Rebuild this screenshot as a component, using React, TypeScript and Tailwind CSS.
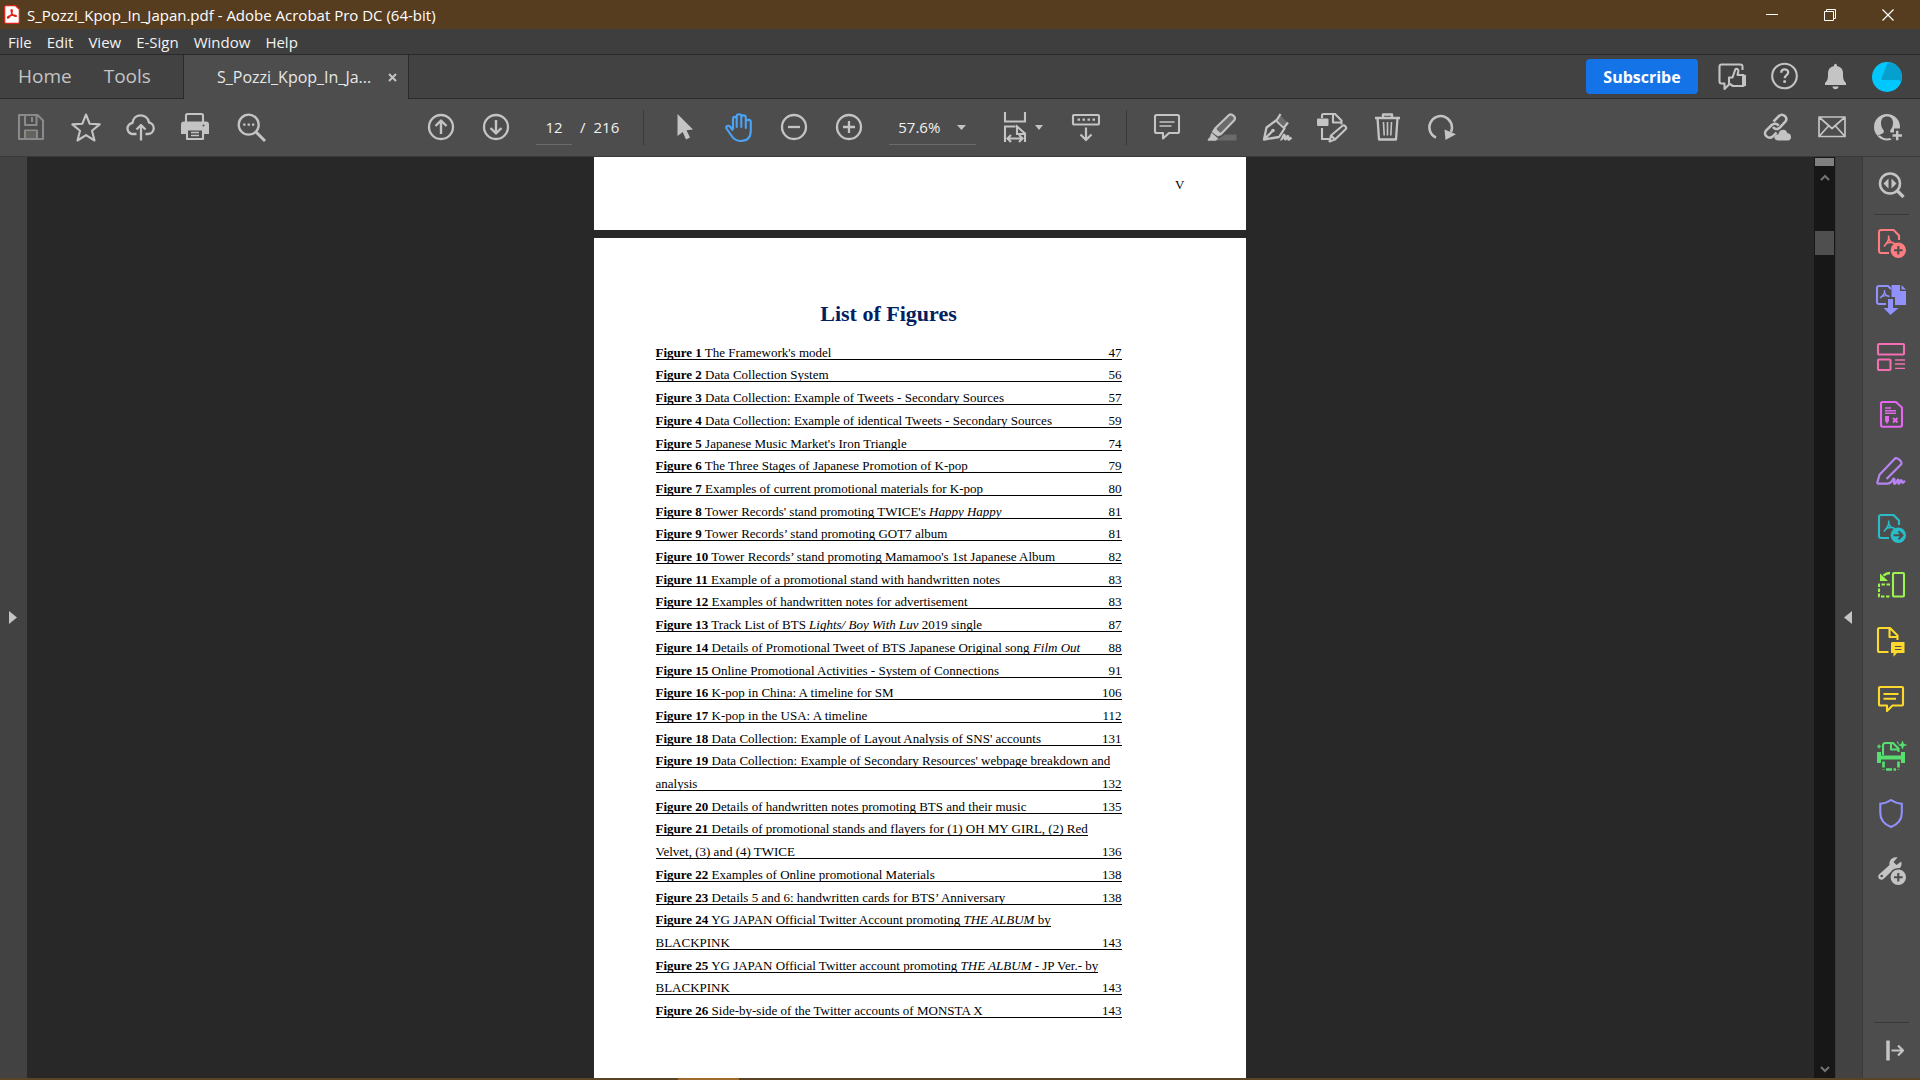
import React from "react";

type IconProps = { children: React.ReactNode };

function Icon({ children }: IconProps) {
  return (
    <svg
      viewBox="0 0 33 33"
      width="33"
      height="33"
      fill="none"
      stroke="currentColor"
      strokeWidth="2.1"
      strokeLinejoin="round"
      aria-hidden="true"
      className="shrink-0"
    >
      {children}
    </svg>
  );
}

function ToolButton({ label, children, className = "" }: { label: string; children: React.ReactNode; className?: string }) {
  return (
    <button type="button" aria-label={label} className={"flex h-full w-[55px] shrink-0 items-center justify-center " + className}>
      <Icon>{children}</Icon>
    </button>
  );
}

function SideButton({ label, color, height = "h-[57px]", children }: { label: string; color: string; height?: string; children: React.ReactNode }) {
  return (
    <button type="button" aria-label={label} className={"flex w-full shrink-0 items-center justify-center " + height + " " + color}>
      <Icon>{children}</Icon>
    </button>
  );
}

function AcrobatMark() {
  return (
    <svg viewBox="0 0 16 19" width="16" height="19" aria-hidden="true">
      <path d="M2 .7h9.5l3.8 3.6V17a1.3 1.3 0 0 1-1.3 1.3H2A1.3 1.3 0 0 1 .7 17V2A1.3 1.3 0 0 1 2 .7z" fill="#fff" stroke="#e2231a" strokeWidth="1.2" />
      <path d="M7.5 4.6c1.4 0 .8 3-.4 5.2-1 1.9-2.700 3.500-3.500 3.100-.9-.6 1.200-2 3.600-2.500 2.500-.5 5.200-.3 5.200.6 0 1-2.300.300-3.700-1.300C7.300 8.200 6.500 4.600 7.500 4.600z" fill="none" stroke="#e2231a" strokeWidth="1.3" />
    </svg>
  );
}

function PdfGlyph() {
  return (
    <path d="M13.5 8.5c1 3-.6 7-4.6 11M13.5 10c.6 4 3 6.300 6.500 6.500M10.500 16.800c2.500-1.300 5-1.700 8-1.300" strokeWidth="1.6" />
  );
}

function TitleBar() {
  return (
    <header className="flex h-[29px] shrink-0 items-center bg-[#573d20] text-white">
      <div className="flex items-center gap-[7px] pl-1">
        <AcrobatMark />
        <h1 className="text-[15px] leading-5">S_Pozzi_Kpop_In_Japan.pdf - Adobe Acrobat Pro DC (64-bit)</h1>
      </div>
      <div className="ml-auto flex pr-[3px]">
        <button type="button" aria-label="Minimize" className="flex h-[29px] w-[58px] items-center justify-center">
          <svg width="12" height="12" stroke="currentColor"><path d="M0 5.500h12" /></svg>
        </button>
        <button type="button" aria-label="Restore" className="flex h-[29px] w-[58px] items-center justify-center">
          <svg width="12" height="12" stroke="currentColor" fill="none"><path d="M.5 2.500h9v9h-9zM2.500 2.500v-2h9v9h-2" /></svg>
        </button>
        <button type="button" aria-label="Close" className="flex h-[29px] w-[58px] items-center justify-center">
          <svg width="12" height="12" stroke="currentColor" strokeWidth="1.2"><path d="M.5.5l11 11M11.500.5l-11 11" /></svg>
        </button>
      </div>
    </header>
  );
}

function MenuBar() {
  return (
    <nav aria-label="Menu" className="flex h-[26px] shrink-0 items-center gap-[15px] border-b border-[#2a2a2a] bg-[#3e3e3e] pl-2 text-[15px] leading-5 text-[#f2f2f2]">
      {["File", "Edit", "View", "E-Sign", "Window", "Help"].map((item) => (
        <button key={item} type="button">{item}</button>
      ))}
    </nav>
  );
}

function TabBar() {
  return (
    <div className="flex h-11 shrink-0 bg-[#424242] text-[#c4c4c4]">
      <div className="flex w-[184px] shrink-0 gap-8 border-r border-b border-[#2a2a2a] pl-[18px] text-[19px]">
        <button type="button">Home</button>
        <button type="button">Tools</button>
      </div>
      <div className="flex w-[224px] shrink-0 items-center bg-[#4d4d4d] pl-[33px]">
        <span className="w-[159px] text-[16px] text-[#e6e6e6]">S_Pozzi_Kpop_In_Ja...</span>
        <button type="button" aria-label="Close tab" className="ml-3">
          <svg width="9" height="9" stroke="currentColor" strokeWidth="2"><path d="M1 1l7 7M8 1L1 8" /></svg>
        </button>
      </div>
      <div className="flex flex-1 items-center justify-end border-b border-l border-[#2a2a2a] pr-2">
        <button type="button" className="mr-[10px] h-[35px] w-28 rounded bg-[#1473e6] text-[16px] font-bold text-white">Subscribe</button>
        <button type="button" aria-label="Feedback" className="flex w-[51px] justify-center">
          <Icon>
            <path d="M25.500 10V6.500a2 2 0 0 0-2-2h-19a2 2 0 0 0-2 2v15a2 2 0 0 0 2 2h3V29l5-5" />
            <path d="M12 17.500h3.500l3-8.500c2.500-.5 3.300 1 2.700 3l-.7 3h6v11H16l-4-2.500z" />
            <path d="M25 15h4v11h-4z" fill="currentColor" stroke="none" />
          </Icon>
        </button>
        <button type="button" aria-label="Help" className="flex w-[51px] justify-center">
          <Icon>
            <circle cx="16.5" cy="16" r="12.3" />
            <path d="M13.200 12.700c0-4.500 7-4.300 7-.4 0 2.900-3.500 2.700-3.500 6" strokeWidth="2.3" />
            <circle cx="16.6" cy="21.5" r="1.5" fill="currentColor" stroke="none" />
          </Icon>
        </button>
        <button type="button" aria-label="Notifications" className="flex w-[51px] justify-center">
          <Icon>
            <path d="M15 6c0-3 3-3 3 0 4 .8 6 3.500 6 7.500 0 5.500.5 7 3 9.500v2H6v-2c2.500-2.500 3-4 3-9.500 0-4 2-6.700 6-7.500zM13.500 26.500h6c0 3.500-6 3.500-6 0z" fill="currentColor" stroke="none" />
          </Icon>
        </button>
        <button type="button" aria-label="Account" className="flex w-[51px] justify-center">
          <svg width="30" height="30" viewBox="0 0 30 30" aria-hidden="true">
            <circle cx="15" cy="15" r="15" fill="#00c8ff" />
            <path d="M15.500.500A14.800 14.800 0 0 1 29 20l-2-2H9z" fill="#06a0cf" />
          </svg>
        </button>
      </div>
    </div>
  );
}

function Toolbar() {
  return (
    <div role="toolbar" aria-label="Tools" className="flex h-[58px] shrink-0 items-center border-b border-[#3a3a3a] bg-[#4d4d4d] pr-[5px] pl-1 text-[#c4c4c4]">
      <ToolButton label="Save" className="text-[#8a8a8a]">
        <path d="M4 4h18.500l5.500 5.500V28H4zM10 4v10h11.500V4M10 28v-8.500h12V28" />
        <path d="M11 20.500h10V27H11z" fill="#66625e" stroke="none" />
        <path d="M17 6v5" />
      </ToolButton>
      <ToolButton label="Add to favorites">
        <path d="M16 3.500l3.700 9.300 10 .6-7.700 6.400 2.500 9.700L16 24.100l-8.500 5.400L10 19.800l-7.700-6.400 10-.6z" />
      </ToolButton>
      <ToolButton label="Upload to cloud">
        <path d="M11.500 23H8.500a5.500 5.500 0 0 1-1-11C8 6.500 12 4.300 15.500 4.300s7.500 2.200 8.500 7.200a5.800 5.800 0 0 1-1 11.500h-2.500M16 29.500V14M11.500 18.500L16 14l4.500 4.500" strokeWidth="2.3" />
      </ToolButton>
      <ToolButton label="Print">
        <path d="M6 11V4.500c0-1 .5-1.500 1.500-1.500h14c1 0 1.500.5 1.500 1.500V11" />
        <path d="M1 13.500c0-2 1-3 3-3h22c2 0 3 1 3 3V23h-5v-3.500H6V23H1z" fill="currentColor" stroke="none" />
        <path d="M7 19v9h16v-9" />
        <path d="M11 21.500h8M11 24.500h8" strokeWidth="1.3" />
        <circle cx="23.5" cy="14.5" r="1" fill="#4d4d4d" stroke="none" />
      </ToolButton>
      <ToolButton label="Find">
        <circle cx="13.7" cy="13.7" r="10" strokeWidth="2.3" />
        <path d="M21 21l9 9" strokeWidth="3" />
        <path d="M8.200 13.700h2.300M12.600 13.700h2.300M17 13.700h2.300" strokeWidth="2.2" />
      </ToolButton>

      <ToolButton label="Previous page" className="ml-[135px]">
        <circle cx="16" cy="16" r="12" strokeWidth="2.3" />
        <path d="M16 23V10M10.500 15L16 9.500l5.500 5.500" strokeWidth="2.4" />
      </ToolButton>
      <ToolButton label="Next page">
        <circle cx="16" cy="16" r="12" strokeWidth="2.3" />
        <path d="M16 9v13M10.500 17l5.500 5.500 5.500-5.500" strokeWidth="2.4" />
      </ToolButton>
      <div className="ml-3 flex h-[35px] items-center text-[15px] text-[#f0f0f0]">
        <input aria-label="Page number" defaultValue="12" className="h-[35px] w-9 border-b border-[#6a6a6a] bg-transparent text-center outline-none" />
        <span className="ml-2">/</span>
        <span className="ml-2">216</span>
      </div>
      <div className="mr-[13px] ml-6 h-[35px] w-px bg-[#393939]" />
      <ToolButton label="Select">
        <path d="M9.500 3L25 18.500l-6.500.7 3.500 7.300-4 2-3.300-7.500-5.200 4z" fill="currentColor" stroke="none" />
      </ToolButton>
      <ToolButton label="Pan" className="text-[#4ba3f5]">
        <path d="M10 18V8c0-2.800 3.700-2.800 3.700 0v8V5.500c0-3 4.600-3 4.600 0V16 6.500c0-2.800 4.500-2.800 4.500 0V17v-6c0-2.800 5-2.800 5 0v8.500c0 7-4 10.500-10.300 10.500-5 0-7.500-2.500-9.500-6L3.500 17.500c-1-2.300 1.800-3.700 3.500-2L10 19.500" />
      </ToolButton>
      <ToolButton label="Zoom out">
        <circle cx="16" cy="16" r="12" strokeWidth="2.3" />
        <path d="M10 16h12" strokeWidth="2.3" />
      </ToolButton>
      <ToolButton label="Zoom in">
        <circle cx="16" cy="16" r="12" strokeWidth="2.3" />
        <path d="M10 16h12M16 10v12" strokeWidth="2.3" />
      </ToolButton>
      <div className="ml-3 grid w-[87px] shrink-0 items-center">
        <select aria-label="Zoom level" className="col-start-1 row-start-1 h-[35px] w-full appearance-none border-b border-[#6a6a6a] bg-transparent pl-[9px] text-[15px] text-[#f0f0f0]">
          <option>57.6%</option>
        </select>
        <svg width="9" height="5" className="pointer-events-none col-start-1 row-start-1 mr-[10px] justify-self-end" fill="currentColor"><path d="M0 0h9L4.500 5z" /></svg>
      </div>
      <button type="button" aria-label="Fit width" className="ml-[23px] flex shrink-0 items-center">
        <Icon>
          <path d="M6 1v9.500h20V1M16.500 15.500H6V31M26 31V22.500l-8-7v7.500h8M8.500 27.500h15M12 24l-3.500 3.500L12 31M20 24l3.500 3.500L20 31" strokeLinejoin="miter" />
        </Icon>
        <svg width="8" height="5" className="ml-[3px]" fill="currentColor"><path d="M0 0h8L4 5z" /></svg>
      </button>
      <ToolButton label="Page display" className="ml-4">
        <rect x="3" y="4" width="26" height="9.500" rx="1" />
        <path d="M7.500 8.700H10M12.500 8.700H15M17.500 8.700H20M22.500 8.700H25" strokeWidth="2.3" />
        <path d="M16 16.500V29M10.500 23.500L16 29l5.500-5.500" strokeWidth="2.2" />
      </ToolButton>
      <div className="mr-[13px] ml-3 h-[35px] w-px shrink-0 bg-[#393939]" />
      <ToolButton label="Comment">
        <path d="M5.500 4h21c1 0 1.500.5 1.500 1.500v15c0 1-.5 1.500-1.500 1.500H18l-6 5.500V22H5.500C4.500 22 4 21.500 4 20.500v-15C4 4.500 4.500 4 5.500 4z" />
        <path d="M8.500 11h15M8.500 15h12" strokeWidth="1.5" />
      </ToolButton>
      <ToolButton label="Highlight">
        <path d="M10 29.500l9-6h11.500v6z" fill="#6b6b6b" stroke="none" />
        <path d="M9.500 17L23 4c2.500-2 7.500 2 5.500 5L15.500 22.500l-5 .5z" fill="#6b6b6b" />
        <path d="M8.500 17l7.500 6.500-4 1.700L6 21zM5.500 22l6.500 5.500-2 2H2c0-1.800 1-2.500 2-3z" fill="currentColor" strokeWidth=".5" />
      </ToolButton>
      <ToolButton label="Fill and sign">
        <path d="M3 28.500L5.500 16.500 15 9.500l8.500 8-5.500 8.500zM3 28.500l8.500-8.500" strokeWidth="2.3" />
        <circle cx="12" cy="19.5" r="1.8" fill="currentColor" stroke="none" />
        <path d="M19 4l7 7-3.500 4.500-7-7z" fill="#6b6b6b" stroke="none" />
        <path d="M19.500 3l-4 6.500M27 11.500l-4 5" strokeWidth="2.3" />
        <path d="M19.500 28.500c2 .5 3-5.500 4-4.500s-.5 4.500 1 4.200 1.500-3.700 2.500-3-.5 3.500 1 3.300l2.500-2" strokeWidth="2.4" />
      </ToolButton>
      <ToolButton label="Edit PDF">
        <path d="M6 7V4.500C6 3.500 6.500 3 7.500 3H19l6.500 6.500v4M17 3v8.500h8M6 17v11h7" />
        <rect x="1" y="7.500" width="11.500" height="7.500" rx="1" fill="currentColor" stroke="none" />
        <path d="M13.500 30.500l1.500-6 11.500-9.800c2-1.200 4.500 1.500 3.300 3.200L19 28.500zM15 24.500l4 4" />
      </ToolButton>
      <ToolButton label="Delete">
        <path d="M4 7h25M12 6.500V3.500h9v3M6.500 7L8 28.500h17L26.500 7" strokeWidth="2.3" />
        <path d="M12.500 11l.7 13.500M16.500 11v13.500M20.500 11l-.7 13.500" strokeWidth="1.6" />
      </ToolButton>
      <ToolButton label="Rotate">
        <path d="M10 26.700A11.300 11.300 0 1 1 25 21" strokeWidth="2.5" />
        <path d="M18.500 18.500l11.500 4.800-10.500 5.700z" fill="currentColor" stroke="none" />
      </ToolButton>

      <ToolButton label="Share link" className="ml-auto">
        <path d="M12.500 10.500L18 5c4-3.500 9.500 1.700 6.300 5.700l-5.500 6c-2.500 2.300-5.300 1.500-6.800-.7M15.500 21.500L12 25.300c-4.500 4-10.500-1.800-6.800-6l5.500-5.300c2.300-2 5.500-1.500 7 .8" strokeWidth="2.5" />
        <path d="M17.500 29.500c-5.500 0-5.500-6 0-6.300.7-5.700 8-5.700 8.800-1 4.500-.5 5 6.500 1.200 7.300z" fill="currentColor" stroke="none" />
      </ToolButton>
      <ToolButton label="Send by email">
        <path d="M3 6h26v19.500H3zM3 6l13 11.500L29 6M3 25.500l9.500-10.500M29 25.500L19.500 15" strokeWidth="1.7" />
      </ToolButton>
      <ToolButton label="Share with others">
        <circle cx="16" cy="16" r="13" fill="currentColor" stroke="none" />
        <path d="M16 5.500c-4 0-6 2.700-6 6.500 0 3 1 5.500 2.700 7.300.5 2-.2 3-1.700 3.500l-4 1.700c2 2.500 5 4.500 9 4.500s7-2 9-4.500l-4-1.700c-1.500-.5-2.200-1.500-1.700-3.500C21 17.500 22 15 22 12c0-3.800-2-6.500-6-6.500z" fill="#4d4d4d" stroke="none" />
        <path d="M8 25a12 12 0 0 0 12 2.800" strokeWidth="2" />
        <path d="M19 24.500h14M26 17.500v14" stroke="#4d4d4d" strokeWidth="6" />
        <path d="M21.500 24.500h9.500M26.200 19.800v9.500" strokeWidth="2.5" />
      </ToolButton>
    </div>
  );
}

type Line = React.ReactNode;
type Figure = { n: number; lines: Line[]; page: number };

const figures: Figure[] = [
  { n: 1, lines: ["The Framework's model"], page: 47 },
  { n: 2, lines: ["Data Collection System"], page: 56 },
  { n: 3, lines: ["Data Collection: Example of Tweets - Secondary Sources"], page: 57 },
  { n: 4, lines: ["Data Collection: Example of identical Tweets - Secondary Sources"], page: 59 },
  { n: 5, lines: ["Japanese Music Market's Iron Triangle"], page: 74 },
  { n: 6, lines: ["The Three Stages of Japanese Promotion of K-pop"], page: 79 },
  { n: 7, lines: ["Examples of current promotional materials for K-pop"], page: 80 },
  { n: 8, lines: [<>Tower Records' stand promoting TWICE's <i>Happy Happy</i></>], page: 81 },
  { n: 9, lines: ["Tower Records’ stand promoting GOT7 album"], page: 81 },
  { n: 10, lines: ["Tower Records’ stand promoting Mamamoo's 1st Japanese Album"], page: 82 },
  { n: 11, lines: ["Example of a promotional stand with handwritten notes"], page: 83 },
  { n: 12, lines: ["Examples of handwritten notes for advertisement"], page: 83 },
  { n: 13, lines: [<>Track List of BTS <i>Lights/ Boy With Luv</i> 2019 single</>], page: 87 },
  { n: 14, lines: [<>Details of Promotional Tweet of BTS Japanese Original song <i>Film Out</i></>], page: 88 },
  { n: 15, lines: ["Online Promotional Activities - System of Connections"], page: 91 },
  { n: 16, lines: ["K-pop in China: A timeline for SM"], page: 106 },
  { n: 17, lines: ["K-pop in the USA: A timeline"], page: 112 },
  { n: 18, lines: ["Data Collection: Example of Layout Analysis of SNS' accounts"], page: 131 },
  { n: 19, lines: ["Data Collection: Example of Secondary Resources' webpage breakdown and", "analysis"], page: 132 },
  { n: 20, lines: ["Details of handwritten notes promoting BTS and their music"], page: 135 },
  { n: 21, lines: ["Details of promotional stands and flayers for (1) OH MY GIRL, (2) Red", "Velvet, (3) and (4) TWICE"], page: 136 },
  { n: 22, lines: ["Examples of Online promotional Materials"], page: 138 },
  { n: 23, lines: ["Details 5 and 6: handwritten cards for BTS’ Anniversary"], page: 138 },
  { n: 24, lines: [<>YG JAPAN Official Twitter Account promoting <i>THE ALBUM</i> by</>, "BLACKPINK"], page: 143 },
  { n: 25, lines: [<>YG JAPAN Official Twitter account promoting <i>THE ALBUM</i> - JP Ver.- by</>, "BLACKPINK"], page: 143 },
  { n: 26, lines: ["Side-by-side of the Twitter accounts of MONSTA X"], page: 143 },
];

function FigureEntry({ figure }: { figure: Figure }) {
  const double = figure.lines.length === 2;
  const name = <b>Figure {figure.n}</b>;
  return (
    <li className={double ? "row-span-2" : ""}>
      <a href={"#figure-" + figure.n} className={double ? "grid h-full grid-rows-2" : "grid h-full"}>
        {double && (
          <span className="flex w-fit items-end border-b border-black">
            <span>{name} {figure.lines[0]}</span>
          </span>
        )}
        <span className="flex items-end justify-between border-b border-black">
          <span>{double ? figure.lines[1] : <>{name} {figure.lines[0]}</>}</span>
          <span>{figure.page}</span>
        </span>
      </a>
    </li>
  );
}

function DocumentView() {
  return (
    <main className="flex min-w-0 flex-1 flex-col items-center gap-2 overflow-hidden bg-[#282828] pr-0.5 font-['Liberation_Serif',serif] text-black">
      <section aria-label="Page 11" className="flex h-[73px] w-[652px] shrink-0 justify-end bg-white pt-[18px] pr-[61px] text-[13px]">
        V
      </section>
      <section aria-label="Page 12" className="w-[652px] flex-1 bg-white pt-[62px] pr-[124px] pl-[62px]">
        <h2 className="text-center text-[22px] leading-7 font-bold text-[#002060]">List of Figures</h2>
        <ol className="mt-[9px] grid h-[681px] auto-rows-fr text-[13px] leading-[13px] whitespace-nowrap">
          {figures.map((figure) => <FigureEntry key={figure.n} figure={figure} />)}
        </ol>
      </section>
    </main>
  );
}

function ScrollBar() {
  return (
    <div className="flex w-[21px] shrink-0 flex-col items-center bg-[#171717] px-px pt-px text-[#737373]">
      <div className="h-2 w-full bg-[#808080]" />
      <svg width="10" height="7" className="mt-2" fill="none" stroke="currentColor" strokeWidth="2"><path d="M1 6l4-4 4 4" /></svg>
      <div className="mt-[50px] h-6 w-full bg-[#4f4f4f]" />
      <svg width="10" height="7" className="mt-auto mb-[5px]" fill="none" stroke="currentColor" strokeWidth="2"><path d="M1 1l4 4 4-4" /></svg>
    </div>
  );
}

function SidePanel() {
  return (
    <aside aria-label="Tools pane" className="flex w-[58px] shrink-0 flex-col items-center border-l border-[#3a3a3a] bg-[#4d4d4d]">
      <SideButton label="Search tools" color="text-[#c4c4c4]">
        <circle cx="15" cy="14.5" r="10" strokeWidth="2.5" />
        <path d="M22 21.500l6.500 6.500" strokeWidth="3.2" />
        <path d="M13.500 9.500v10l-5-5zM16.500 9.500v10l5-5z" fill="currentColor" stroke="none" />
      </SideButton>
      <div className="h-px w-[35px] shrink-0 bg-[#393939]" />
      <SideButton label="Create PDF" color="text-[#ff7c80]">
        <path d="M14 26H6c-1.300 0-2-.7-2-2V5c0-1.300.7-2 2-2h12.500l5.500 5.500V13" />
        <PdfGlyph />
        <circle cx="23.3" cy="23.3" r="7.7" fill="currentColor" stroke="none" />
        <path d="M19 23.300h8.600M23.300 19v8.600" stroke="#4d4d4d" />
      </SideButton>
      <SideButton label="Combine files" color="text-[#9091fa]">
        <path d="M11 20H4c-1.300 0-2-.7-2-2V4c0-1.300.7-2 2-2h9l3 3" />
        <path d="M9.500 6c.5 3-1 5.500-4.500 8M9.500 8c.5 2.500 2 4 5 4.500M7 12.500c2-1 4-1 7-.5" strokeWidth="1.3" />
        <path d="M16.500 1H25v6h6v14H20V13h-3.500z" fill="currentColor" stroke="none" />
        <path d="M26.500 1l4.500 4.500h-4.500z" fill="currentColor" stroke="none" />
        <path d="M13 15h5v9h5.500l-8 7-7-7H13z" fill="currentColor" stroke="none" />
      </SideButton>
      <SideButton label="Edit PDF" color="text-[#f46eb4]">
        <rect x="3" y="3" width="26" height="10.500" rx="1" />
        <rect x="3" y="18.500" width="12.500" height="10.500" rx="1" />
        <path d="M20 19h10M20 23h10M20 27.300h10" strokeWidth="1.3" />
      </SideButton>
      <SideButton label="Prepare form" color="text-[#e467ef]">
        <path d="M7.500 4H21l6 5.500V27c0 1-.7 1.700-1.700 1.700H7.700C6.700 28.700 6 28 6 27V5.500C6 4.500 6.500 4 7.500 4z" />
        <path d="M10 10h6M10 12.700h11M10 15.200h11" strokeWidth="1.5" />
        <path d="M10 18h4v5l-2 3-2-3z" fill="currentColor" stroke="none" />
        <path d="M18 20l4.500 4.500M22.500 20L18 24.500" />
      </SideButton>
      <SideButton label="Request signatures" color="text-[#b683f0]">
        <path d="M2 28.700l2.500-9L19.500 4c2-2.300 9 2.500 6.500 5.500L11.500 24M2 28.700h10.500c3.500-.5 5-3 5.500-4.500s2 0 1.500 1.500-1 3.500.5 3 2.500-5 3.500-4-1 4.500.5 4 1.500-4 2.500-3.500 0 3 1.500 2.500l2-2" strokeWidth="2.2" />
      </SideButton>
      <SideButton label="Export PDF" color="text-[#28bdc9]">
        <path d="M14 26H6c-1.300 0-2-.7-2-2V5c0-1.300.7-2 2-2h12.500l5.500 5.500V13" />
        <PdfGlyph />
        <circle cx="23.3" cy="23.3" r="7.7" fill="currentColor" stroke="none" />
        <path d="M18.500 23.300h8.500M23.500 19.300l4 4-4 4" stroke="#4d4d4d" />
      </SideButton>
      <SideButton label="Organize pages" color="text-[#9bf54e]">
        <rect x="18" y="4" width="11" height="23.500" rx="1" />
        <path d="M15 15.500H4v12h11" strokeDasharray="3.500 1.500" />
        <path d="M15 4c-3 0-4.500.7-6.500 2.700" strokeWidth="2.5" />
        <path d="M5 4.500V12h8z" fill="currentColor" stroke="none" />
      </SideButton>
      <SideButton label="Send for comments" color="text-[#fdd92e]">
        <path d="M13.500 26H4.500c-1 0-1.500-.5-1.500-1.500v-21C3 2.500 3.500 2 4.500 2H15l7.500 7.500V14M14.500 2v9h8" />
        <path d="M17 16h12.500v11H22l-3.500 3.700V27H16V17z" fill="currentColor" stroke="none" />
        <path d="M20 20.500h6.500M20 23.500h6.500" stroke="#4d4d4d" strokeWidth="1.2" />
      </SideButton>
      <SideButton label="Comment" color="text-[#fdd92e]">
        <path d="M5 4h22c.6 0 1 .4 1 1v16.500c0 .6-.4 1-1 1h-9.500L12 28v-5.500H5c-.6 0-1-.4-1-1V5c0-.6.4-1 1-1z" />
        <path d="M8.500 11h15M8.500 15.700h12.500" />
      </SideButton>
      <SideButton label="Scan and OCR" color="text-[#57e06f]">
        <path d="M8 15V5.500C8 3.500 9 3 10.500 3H18l5.500 5.500V12M16 3v6.500h7.500" />
        <path d="M2 12h4v3.500h20V12h4v11h-4v-3.500H6V23H2z" fill="currentColor" stroke="none" />
        <path d="M8.500 21.500v8M23.500 21.500v8M11 29.500h10" strokeWidth="2.6" strokeDasharray="6 1.500" />
        <path d="M27.500 1l1 3 3 1-3 1-1 3-1-3-3-1 3-1zM22 1l.6 1.500 1.400.5-1.500.6M4 4.500l.6 1.400 1.500.6-1.500.6L4 8.500l-.6-1.400L2 6.500l1.400-.6z" fill="currentColor" strokeWidth=".6" />
      </SideButton>
      <SideButton label="Protect" color="text-[#9091fa]">
        <path d="M16 3c3.500 2.500 7 3.500 10.800 3.700V16c0 6.500-4.500 11.500-10.800 14C9.700 27.500 5.300 22.500 5.300 16V6.700C9 6.500 12.500 5.500 16 3z" strokeLinejoin="miter" />
      </SideButton>
      <SideButton label="More tools" color="text-[#c4c4c4]">
        <path d="M22.500 3.500l-4 4.500 3 3 4.700-3.500c1.500 6-2.500 8.500-7 7.500L9 24.500c-3.500 3.500-8-1.500-4.500-4.500L14.500 11c-.7-4.500 3-9 8-7.500z" fill="currentColor" stroke="none" />
        <circle cx="6.700" cy="22" r="1.3" fill="#4d4d4d" stroke="none" />
        <circle cx="23.3" cy="23.3" r="8.5" fill="currentColor" stroke="#4d4d4d" strokeWidth="1.5" />
        <path d="M19 23.300h8.600M23.300 19v8.600" stroke="#4d4d4d" />
      </SideButton>
      <div className="mt-auto h-px w-[35px] shrink-0 bg-[#393939]" />
      <SideButton label="Collapse tools pane" color="text-[#c4c4c4]" height="h-[55px]">
        <path d="M13 6.500v20" strokeWidth="3.5" />
        <path d="M16.500 16.500h11M23 11.500l5 5-5 5" strokeWidth="2.2" />
      </SideButton>
    </aside>
  );
}

export default function App() {
  return (
    <div className="flex h-screen flex-col overflow-hidden bg-[#282828] font-['Open_Sans','Noto_Sans',sans-serif]">
      <TitleBar />
      <MenuBar />
      <TabBar />
      <Toolbar />
      <div className="flex min-h-0 flex-1">
        <button type="button" aria-label="Open navigation pane" className="flex w-[27px] shrink-0 items-center justify-center bg-[#424242] pr-px text-[#c4c4c4]">
          <svg width="8" height="13" fill="currentColor"><path d="M0 0v13l8-6.500z" /></svg>
        </button>
        <DocumentView />
        <ScrollBar />
        <button type="button" aria-label="Close tools pane" className="flex w-[27px] shrink-0 items-center justify-center border-l border-[#3a3a3a] bg-[#424242] pr-0.5 text-[#c4c4c4]">
          <svg width="8" height="13" fill="currentColor"><path d="M8 0v13L0 6.500z" /></svg>
        </button>
        <SidePanel />
      </div>
      <footer className="flex h-0.5 shrink-0 bg-[#5a4425]">
        <div className="ml-[678px] w-[61px] bg-[#a0692c]" />
      </footer>
    </div>
  );
}
